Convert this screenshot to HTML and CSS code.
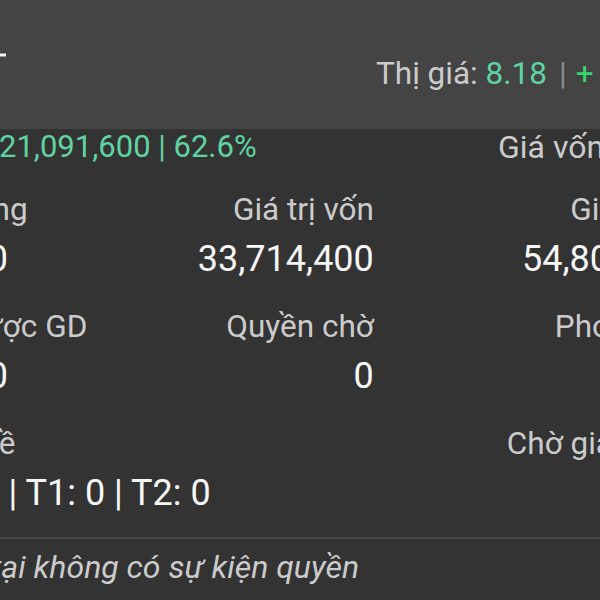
FILE: index.html
```html
<!DOCTYPE html>
<html lang="vi">
<head>
  <meta charset="UTF-8" />
  <meta name="viewport" content="width=device-width, initial-scale=1.0" />
  <title>Chi tiết mã</title>
  <link rel="stylesheet" href="styles.css">
</head>
<body>
  <div class="screen">
    <header class="top">
      <svg class="back" width="86" height="24" viewBox="0 0 86 24">
        <path d="M86 12H10M22 2L10 12l12 10" fill="none" stroke="#f2f2f2" stroke-width="3"/>
      </svg>
      <div class="price">Thị giá: <span class="green">8.18</span><span class="sep">|</span><span class="plus">+ 0.18</span></div>
    </header>

    <div class="summary">
      <div class="pl"><span class="muted">Lãi:</span>21,091,600 | 62.6%</div>
      <div class="cost">Giá vốn: 5,032</div>
    </div>

    <div class="stats">
      <div class="cell">
        <div class="label">KL tổng</div>
        <div class="value">6,700</div>
      </div>
      <div class="cell right">
        <div class="label">Giá trị vốn</div>
        <div class="value">33,714,400</div>
      </div>
      <div class="cell right">
        <div class="label">Giá trị TT</div>
        <div class="value">54,806,000</div>
      </div>

      <div class="cell">
        <div class="label">KL được GD</div>
        <div class="value">6,700</div>
      </div>
      <div class="cell right">
        <div class="label">Quyền chờ</div>
        <div class="value">0</div>
      </div>
      <div class="cell right">
        <div class="label">Phong tỏa</div>
        <div class="value">0</div>
      </div>

      <div class="cell wide">
        <div class="label">Chờ về</div>
        <div class="value">T0: 0 | T1: 0 | T2: 0</div>
      </div>
      <div class="cell right">
        <div class="label">Chờ giao dịch</div>
        <div class="value">0</div>
      </div>
    </div>

    <hr class="divider">
    <p class="note">Hiện tại không có sự kiện quyền</p>
  </div>
</body>
</html>
```

FILE: styles.css
```css
html, body {
  overflow: hidden;
}
body {
  margin: 0;
  background-color: #333333;
  color: #f2f2f2;
  font-family: Roboto, "Noto Sans", sans-serif;
}
.screen {
  box-sizing: border-box;
  width: 810px;
  margin-left: -96px;
  padding: 0 16px;
}
.top {
  height: 129px;
  margin: 0 -16px;
  padding: 0 16px;
  background-color: #444444;
  display: flex;
  align-items: flex-start;
}
.back {
  display: block;
  flex-shrink: 0;
  margin-top: 43px;
}
.price {
  margin-top: 56px;
  margin-left: 370px;
  font-size: 31.5px;
  line-height: 36px;
  color: #cbcbcb;
  white-space: nowrap;
}
.green { color: #5fd3a2; }
.sep {
  margin: 0 9px 0 12px;
  color: #8c8c8c;
}
.plus { color: #36d46c; }

.summary {
  display: flex;
  justify-content: space-between;
  font-size: 32px;
  line-height: 36px;
}
.pl {
  font-size: 31px;
  color: #5fd3a2;
}
.muted {
  display: inline-block;
  width: 79px;
  color: #cbcbcb;
}
.cost { color: #cbcbcb; }

.stats {
  display: grid;
  grid-template-columns: minmax(0, 2fr) minmax(0, 5fr) minmax(0, 5fr);
  row-gap: 29px;
  margin-top: 27px;
}
.cell.right { text-align: right; }
.cell.wide { grid-column: span 2; }
.label {
  font-size: 31.5px;
  line-height: 36px;
  color: #cbcbcb;
  white-space: nowrap;
}
.value {
  margin-top: 10px;
  font-size: 36px;
  line-height: 42px;
  color: #f7f7f7;
  white-space: nowrap;
}
.divider {
  margin: 23px -16px 0;
  border: none;
  height: 2px;
  background-color: #4a4a4a;
}
.note {
  margin: 10px 0 0;
  font-size: 32px;
  line-height: 36px;
  font-style: italic;
  color: #cbcbcb;
}
```
